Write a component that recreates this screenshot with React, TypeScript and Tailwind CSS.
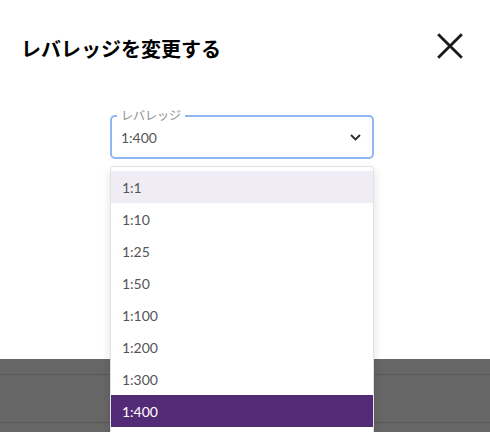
import { useState } from "react";

const options = ["1:1", "1:10", "1:25", "1:50", "1:100", "1:200", "1:300", "1:400"];

export default function App() {
    const [value, setValue] = useState("1:400");
    const hovered = "1:1";

    return (
        <div className="relative flex flex-col h-[432px] w-[490px] overflow-hidden bg-white font-['Lato','Noto_Sans_CJK_JP',sans-serif]">
            <div className="flex items-center justify-between pl-[21px] pr-[26px] pt-[30px]">
                <h1 className="text-[20px] leading-[38px] font-bold text-black font-['Noto_Sans_CJK_JP',sans-serif]">
                    レバレッジを変更する
                </h1>
                <button className="-mt-[6px] flex h-[28px] w-[28px] items-center justify-center text-[#1a1a1a]">
                    <svg width="26" height="26" viewBox="0 0 24 24" fill="none" stroke="currentColor" strokeWidth="2.6" strokeLinecap="square">
                        <path d="M2 2 L22 22 M22 2 L2 22" />
                    </svg>
                </button>
            </div>

            <div className="relative ml-[110px] mt-[47px] w-[264px]">
                <div className="flex h-[44px] items-center justify-between rounded-[5px] border-2 border-[#8fb6f5] pl-[9px] pr-[11px]">
                    <span className="text-[14px] text-[#555555]">{value}</span>
                    <svg width="11" height="7" viewBox="0 0 11 7" fill="none" stroke="#2b2b2b" strokeWidth="1.8">
                        <path d="M1 1 L5.5 5.5 L10 1" />
                    </svg>
                </div>
                <span className="absolute left-[7px] -top-[8px] bg-white px-[4px] text-[12px] leading-[16px] text-[#8a8a8a] font-['Noto_Sans_CJK_JP',sans-serif]">
                    レバレッジ
                </span>

                <ul className="absolute left-0 top-[51px] z-10 w-[264px] rounded-[4px] border border-[#e2e2e2] bg-white pt-[4px] pb-[8px] shadow-[0_4px_10px_rgba(0,0,0,0.12)]">
                    {options.map((opt) => (
                        <li
                            key={opt}
                            onClick={() => setValue(opt)}
                            className={`flex h-[32px] cursor-pointer items-center px-[11px] text-[14px] ${
                                opt === value
                                    ? "bg-[#532a76] text-white"
                                    : opt === hovered
                                    ? "bg-[#efecf6] text-[#555555]"
                                    : "text-[#555555]"
                            }`}
                        >
                            {opt}
                        </li>
                    ))}
                </ul>
            </div>

            <div className="mt-auto h-[73px] bg-[#666666] pt-[15px]">
                <div className="h-[49px] border-t border-b border-[#585858]" />
            </div>
        </div>
    );
}
